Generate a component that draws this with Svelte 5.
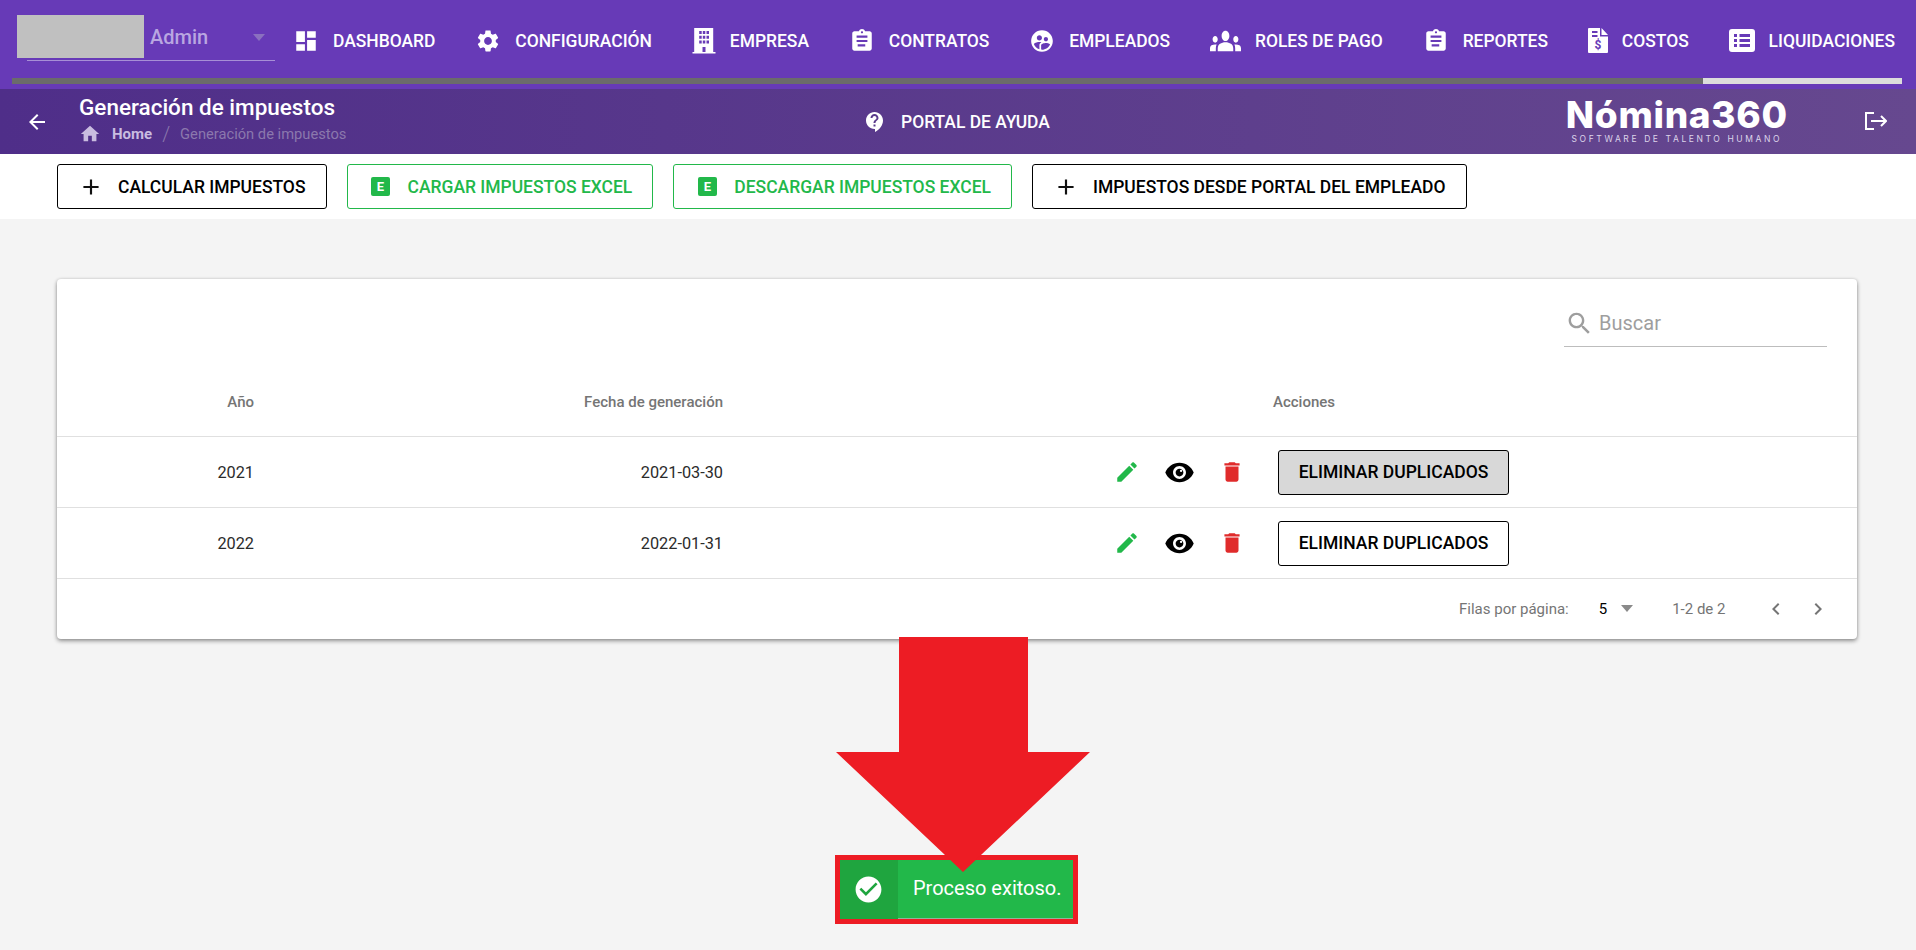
<script>
  const clipboard = 'M19 3h-4.18C14.4 1.84 13.3 1 12 1c-1.3 0-2.4.84-2.82 2H5c-1.1 0-2 .9-2 2v14c0 1.1.9 2 2 2h14c1.1 0 2-.9 2-2V5c0-1.1-.9-2-2-2zm-7 0c.55 0 1 .45 1 1s-.45 1-1 1-1-.45-1-1 .45-1 1-1zm3 14H8v-2h7v2zm2-4H7v-2h10v2zm0-4H7V7h10v2z';

  const menu = [
    { label: 'DASHBOARD', w: 26, h: 26, box: '0 0 24 24', d: 'M3 13h8V3H3v10zm0 8h8v-6H3v6zm10 0h8V11h-8v10zm0-18v6h8V3h-8z' },
    { label: 'CONFIGURACIÓN', w: 26, h: 26, box: '0 0 24 24', d: 'M19.14 12.94c.04-.3.06-.61.06-.94 0-.32-.02-.64-.07-.94l2.03-1.58c.18-.14.23-.41.12-.61l-1.92-3.32c-.12-.22-.37-.29-.59-.22l-2.39.96c-.5-.38-1.03-.7-1.62-.94L14.4 2.81c-.04-.24-.24-.41-.48-.41h-3.84c-.24 0-.43.17-.47.41L9.25 5.35c-.59.24-1.13.57-1.62.94l-2.39-.96c-.22-.08-.47 0-.59.22L2.74 8.87c-.12.21-.08.47.12.61l2.03 1.58c-.05.3-.09.63-.09.94s.02.64.07.94l-2.03 1.58c-.18.14-.23.41-.12.61l1.92 3.32c.12.22.37.29.59.22l2.39-.96c.5.38 1.03.7 1.62.94l.36 2.54c.05.24.24.41.48.41h3.84c.24 0 .44-.17.47-.41l.36-2.54c.59-.24 1.13-.56 1.62-.94l2.39.96c.22.08.47 0 .59-.22l1.92-3.32c.12-.22.07-.47-.12-.61l-2.01-1.58zM12 15.6c-1.98 0-3.6-1.62-3.6-3.6s1.62-3.6 3.6-3.6 3.6 1.62 3.6 3.6-1.62 3.6-3.6 3.6z' },
    { label: 'EMPRESA', w: 24, h: 27, box: '0.5 0 24 27', d: 'M2.7 1h19v24H24v1.4H1V25h1.7zM7.7 4v3h2.5V4zm3.6 0v3h2.5V4zm3.7 0v3h2.5V4zM7.7 8.7v3h2.5v-3zm3.6 0v3h2.5v-3zm3.7 0v3h2.5v-3zM7.7 13.4v3h2.5v-3zm3.6 0v3h2.5v-3zm3.7 0v3h2.5v-3zM11 20v5h3v-5z' },
    { label: 'CONTRATOS', w: 26, h: 26, box: '0 0 24 24', d: clipboard },
    { label: 'EMPLEADOS', w: 26, h: 26, box: '0 0 24 24', d: 'M11.99 2c-5.52 0-10 4.48-10 10s4.48 10 10 10 10-4.48 10-10-4.48-10-10-10zm3.61 6.34c1.07 0 1.93.86 1.93 1.93 0 1.07-.86 1.93-1.93 1.93-1.07 0-1.93-.86-1.93-1.93-.01-1.07.86-1.93 1.93-1.93zm-6-1.58c1.3 0 2.36 1.06 2.36 2.36 0 1.3-1.06 2.36-2.36 2.36s-2.36-1.06-2.36-2.36c0-1.31 1.05-2.36 2.36-2.36zm0 9.13v3.75c-2.4-.75-4.3-2.6-5.14-4.96 1.05-1.12 3.67-1.69 5.14-1.69.53 0 1.2.08 1.9.22-1.64.87-1.9 2.02-1.9 2.68zM11.99 20c-.27 0-.53-.01-.79-.04v-4.07c0-1.42 2.94-2.13 4.4-2.13 1.07 0 2.92.39 3.84 1.15-1.17 2.97-4.06 5.09-7.45 5.09z' },
    { label: 'ROLES DE PAGO', w: 31, h: 22, box: '0 5.5 24 13', stretch: true, d: 'M12 12.75c1.63 0 3.07.39 4.24.9 1.08.48 1.76 1.56 1.76 2.73V18H6v-1.61c0-1.18.68-2.26 1.76-2.73 1.17-.52 2.61-.91 4.24-.91zM4 13c1.1 0 2-.9 2-2s-.9-2-2-2-2 .9-2 2 .9 2 2 2zm1.13 1.1c-.37-.06-.74-.1-1.13-.1-.99 0-1.93.21-2.78.58C.48 14.9 0 15.62 0 16.43V18h4.5v-1.61c0-.83.23-1.61.63-2.29zM20 13c1.1 0 2-.9 2-2s-.9-2-2-2-2 .9-2 2 .9 2 2 2zm4 3.43c0-.81-.48-1.53-1.22-1.85-.85-.37-1.79-.58-2.78-.58-.39 0-.76.04-1.13.1.4.68.63 1.46.63 2.29V18H24v-1.57zM12 6c1.66 0 3 1.34 3 3s-1.34 3-3 3-3-1.34-3-3 1.34-3 3-3z' },
    { label: 'REPORTES', w: 26, h: 26, box: '0 0 24 24', d: clipboard },
    { label: 'COSTOS', w: 20, h: 25, box: '0 0 20 25', dollar: true, d: 'M1 0h11v8.5h8V24a1 1 0 0 1-1 1H1a1 1 0 0 1-1-1V1a1 1 0 0 1 1-1zM4 3v2h5.500V3zm0 4v2h5.500V7zM13.500 0 20 7h-6.500z' },
    { label: 'LIQUIDACIONES', w: 26, h: 23, box: '0 0 26 23', d: 'M3 0h20a3 3 0 0 1 3 3v17a3 3 0 0 1-3 3H3a3 3 0 0 1-3-3V3a3 3 0 0 1 3-3zM5 5v3h3V5zm5.500 0v3H21V5zM5 10v3h3v-3zm5.500 0v3H21v-3zM5 15v3h3v-3zm5.500 0v3H21v-3z' }
  ];

  const actions = [
    { label: 'CALCULAR IMPUESTOS', excel: false },
    { label: 'CARGAR IMPUESTOS EXCEL', excel: true },
    { label: 'DESCARGAR IMPUESTOS EXCEL', excel: true },
    { label: 'IMPUESTOS DESDE PORTAL DEL EMPLEADO', excel: false }
  ];

  const rows = [
    { year: '2021', date: '2021-03-30', hover: true },
    { year: '2022', date: '2022-01-31', hover: false }
  ];
</script>

<div class="page">
  <header class="nav">
    <div class="nav-row">
      <div class="company">
        <div class="company-logo"></div>
        <span class="company-name">Admin</span>
        <span class="caret-light"></span>
      </div>
      <nav class="menu">
        {#each menu as item}
          <div class="menu-item">
            <svg width={item.w} height={item.h} viewBox={item.box} preserveAspectRatio={item.stretch ? 'none' : 'xMidYMid meet'} fill="#fff" fill-rule="evenodd">
              <path d={item.d} />
              {#if item.dollar}
                <text x="10" y="21" text-anchor="middle" font-size="12" font-weight="700" font-family="Roboto, sans-serif" fill="#673ab7">$</text>
              {/if}
            </svg>
            <span>{item.label}</span>
          </div>
        {/each}
      </nav>
    </div>
    <div class="scroll">
      <div class="scroll-track"></div>
      <div class="scroll-thumb"></div>
    </div>
  </header>

  <section class="sub">
    <svg class="back" width="24" height="24" viewBox="0 0 24 24" fill="#fff"><path d="M20 11H7.830l5.590-5.590L12 4l-8 8 8 8 1.410-1.410L7.830 13H20v-2z" /></svg>
    <div class="heading">
      <div class="title">Generación de impuestos</div>
      <div class="crumbs">
        <svg width="22" height="22" viewBox="0 0 24 24" fill="#c9bce0"><path d="M10 20v-6h4v6h5v-8h3L12 3 2 12h3v8z" /></svg>
        <span class="crumb-home">Home</span>
        <span class="crumb-sep">/</span>
        <span class="crumb-current">Generación de impuestos</span>
      </div>
    </div>
    <div class="help">
      <svg width="24" height="24" viewBox="0 0 24 24" fill="#fff"><path d="M11.500 2C6.810 2 3 5.810 3 10.500S6.810 19 11.500 19h.5v3c4.860-2.340 8-7 8-11.500C20 5.810 16.190 2 11.500 2zm1 14.500h-2v-2h2v2zm0-3.500h-2c0-3.250 3-3 3-5 0-1.100-.9-2-2-2s-2 .9-2 2h-2c0-2.210 1.790-4 4-4s4 1.790 4 4c0 2.500-3 2.750-3 5z" /></svg>
      <span>PORTAL DE AYUDA</span>
    </div>
    <div class="brand">
      <div class="brand-name">Nómina360</div>
      <div class="brand-tag">SOFTWARE DE TALENTO HUMANO</div>
    </div>
    <svg class="logout" width="22" height="18" viewBox="0 0 22 18" fill="none" stroke="#fff" stroke-width="2"><path d="M9 1H1v16h8" /><path d="M6 9h15M16 4l5 5-5 5" /></svg>
  </section>

  <div class="actions">
    {#each actions as a}
      <button class="btn" class:green={a.excel}>
        <span class="btn-icon">
          {#if a.excel}
            <span class="excel">E</span>
          {:else}
            <svg width="26" height="26" viewBox="0 0 24 24" fill="#111"><path d="M19 13h-6v6h-2v-6H5v-2h6V5h2v6h6v2z" /></svg>
          {/if}
        </span>
        {a.label}
      </button>
    {/each}
  </div>

  <main class="card">
    <div class="toolbar">
      <div class="search">
        <svg width="29" height="29" viewBox="0 0 24 24" fill="#9e9e9e"><path d="M15.500 14h-.79l-.28-.27C15.410 12.590 16 11.110 16 9.500 16 5.910 13.090 3 9.500 3S3 5.910 3 9.500 5.910 16 9.500 16c1.610 0 3.090-.59 4.230-1.570l.27.28v.79l5 4.990L20.490 19l-4.990-5zm-6 0C7.010 14 5 11.990 5 9.500S7.010 5 9.500 5 14 7.010 14 9.500 11.990 14 9.500 14z" /></svg>
        <span>Buscar</span>
      </div>
    </div>

    <div class="grid head">
      <div class="num">Año</div>
      <div class="num">Fecha de generación</div>
      <div class="head-actions">Acciones</div>
    </div>

    {#each rows as row}
      <div class="grid row">
        <div class="num">{row.year}</div>
        <div class="num">{row.date}</div>
        <div class="row-actions">
          <svg width="26" height="26" viewBox="0 0 24 24" fill="#22b84a"><path d="M3 17.250V21h3.750L17.810 9.940l-3.750-3.750L3 17.250zM20.710 7.040c.39-.39.39-1.020 0-1.410l-2.340-2.340c-.39-.39-1.020-.39-1.410 0l-1.830 1.830 3.750 3.750 1.830-1.830z" /></svg>
          <svg class="eye" width="31" height="31" viewBox="0 0 24 24" fill="#000"><path d="M12 4.500C7 4.500 2.730 7.610 1 12c1.730 4.390 6 7.500 11 7.500s9.270-3.110 11-7.500c-1.730-4.390-6-7.500-11-7.500zM12 17c-2.760 0-5-2.240-5-5s2.240-5 5-5 5 2.240 5 5-2.240 5-5 5zm0-8c-1.660 0-3 1.340-3 3s1.340 3 3 3 3-1.340 3-3-1.340-3-3-3z" /><circle cx="13.200" cy="10.800" r=".9" fill="#fff" /></svg>
          <svg class="trash" width="26" height="26" viewBox="0 0 24 24" fill="#e02b2b"><path d="M6 19c0 1.100.9 2 2 2h8c1.100 0 2-.9 2-2V7H6v12zM19 4h-3.500l-1-1h-5l-1 1H5v2h14V4z" /></svg>
          <button class="dup" class:hover={row.hover}>ELIMINAR DUPLICADOS</button>
        </div>
      </div>
    {/each}

    <div class="pager">
      <span class="pager-label">Filas por página:</span>
      <span class="pager-size">5</span>
      <span class="caret-gray"></span>
      <span class="pager-range">1-2 de 2</span>
      <svg class="chev" width="24" height="24" viewBox="0 0 24 24" fill="#757575"><path d="M15.410 7.410 14 6l-6 6 6 6 1.410-1.410L10.830 12z" /></svg>
      <svg class="chev next" width="24" height="24" viewBox="0 0 24 24" fill="#757575"><path d="M10 6 8.590 7.410 13.170 12l-4.580 4.590L10 18l6-6z" /></svg>
    </div>
  </main>

  <div class="toast">
    <div class="toast-icon">
      <svg width="31" height="31" viewBox="0 0 24 24" fill="#fff"><path d="M12 2C6.480 2 2 6.480 2 12s4.480 10 10 10 10-4.480 10-10S17.520 2 12 2zm-2 15l-5-5 1.410-1.410L10 14.170l7.590-7.590L19 8l-9 9z" /></svg>
    </div>
    <div class="toast-text">Proceso exitoso.</div>
  </div>

  <svg class="arrow" width="254" height="236" viewBox="0 0 254 236" fill="#ed1c24"><path d="M63 0h129v115h62L127 235 0 115h63z" /></svg>
</div>

<style>
  :global(body) {
    margin: 0;
    background: #f4f4f4;
    font-family: Roboto, "Liberation Sans", sans-serif;
  }

  .page {
    position: relative;
    height: 950px;
    overflow: hidden;
  }

  .nav {
    height: 89px;
    background: #673ab7;
    color: #fff;
  }

  .nav-row {
    display: flex;
    height: 78px;
    padding-top: 3px;
    box-sizing: border-box;
    align-items: center;
  }

  .company {
    position: relative;
    display: flex;
    width: 258px;
    height: 45px;
    margin: -3px 0 0 17px;
    padding-top: 15px;
    align-items: flex-start;
    align-self: flex-start;
  }

  .company::after {
    content: "";
    position: absolute;
    left: 10px;
    right: 0;
    bottom: -1px;
    height: 1px;
    background: #a78fd6;
  }

  .company-logo {
    width: 127px;
    height: 43px;
    background: #c0c0c0;
  }

  .company-name {
    margin: 10px 0 0 6px;
    font-size: 20px;
    font-weight: 500;
    color: #b9a6e1;
  }

  .caret-light {
    width: 0;
    height: 0;
    margin: 19px 0 0 45px;
    border-left: 6.500px solid transparent;
    border-right: 6.500px solid transparent;
    border-top: 7px solid #8a70bf;
  }

  .menu {
    display: flex;
    gap: 39.800px;
    margin-left: 18px;
  }

  .menu-item {
    display: flex;
    align-items: center;
    gap: 14px;
    font-size: 17.450px;
    font-weight: 500;
    white-space: nowrap;
  }

  .scroll {
    display: flex;
    height: 6px;
    margin-left: 12px;
    width: 1890px;
  }

  .scroll-track {
    flex: 1;
    background: #6b6b6b;
  }

  .scroll-thumb {
    width: 199px;
    background: #dcdcdc;
  }

  .sub {
    display: flex;
    height: 65px;
    align-items: center;
    color: #fff;
    background: linear-gradient(90deg, #4f2e89, #66488f);
  }

  .back {
    margin-left: 25px;
  }

  .heading {
    width: 474px;
    margin-left: 30px;
  }

  .title {
    font-size: 22.500px;
    font-weight: 500;
    line-height: 24px;
    margin-top: -3px;
  }

  .crumbs {
    display: flex;
    align-items: center;
    height: 22px;
    margin-top: 4px;
    font-size: 15px;
  }

  .crumb-home {
    margin-left: 11px;
    font-weight: 700;
    color: #c9bce0;
  }

  .crumb-sep {
    margin: 0 10px;
    font-size: 20px;
    font-weight: 300;
    color: #8b78ad;
  }

  .crumb-current {
    font-size: 14.700px;
    color: #8b78ad;
  }

  .help {
    display: flex;
    align-items: center;
    gap: 14.500px;
    margin-left: 309.500px;
    font-size: 17.450px;
    font-weight: 500;
  }

  .brand {
    width: 224px;
    margin-left: 515px;
    margin-top: -4px;
    text-align: center;
  }

  .brand-name {
    font-family: Inter, sans-serif;
    font-size: 37px;
    font-weight: 800;
    letter-spacing: 0.700px;
    line-height: 38px;
    white-space: nowrap;
  }

  .brand-tag {
    font-family: Inter, sans-serif;
    font-size: 8.500px;
    letter-spacing: 2.600px;
    line-height: 10px;
    color: #dcd4ea;
    white-space: nowrap;
  }

  .logout {
    margin-left: 76px;
    margin-top: -2px;
  }

  .actions {
    display: flex;
    gap: 20px;
    height: 65px;
    padding: 10px 57px;
    box-sizing: border-box;
    background: #fff;
  }

  .btn {
    display: flex;
    align-items: center;
    gap: 14px;
    height: 45px;
    padding: 0 20px;
    background: #fff;
    border: 1px solid #000;
    border-radius: 3px;
    color: #000;
    font: 500 17.480px Roboto, sans-serif;
    white-space: nowrap;
  }

  .btn.green {
    color: #22b84a;
    border-color: #22b84a;
  }

  .btn-icon {
    display: flex;
    width: 26px;
    justify-content: center;
  }

  .excel {
    width: 19px;
    height: 19px;
    background: #22b84a;
    border-radius: 2px;
    color: #fff;
    font-size: 13px;
    font-weight: 700;
    line-height: 19px;
    text-align: center;
  }

  .card {
    width: 1800px;
    height: 360px;
    margin: 60px 0 0 57px;
    background: #fff;
    border-radius: 4px;
    box-shadow: 0 2px 4px rgba(0, 0, 0, 0.4), 0 0 3px rgba(0, 0, 0, 0.12);
  }

  .toolbar {
    display: flex;
    height: 87px;
    justify-content: flex-end;
    padding-right: 30px;
  }

  .search {
    display: flex;
    align-items: flex-end;
    gap: 5px;
    width: 263px;
    height: 68px;
    padding: 0 0 8px 1px;
    box-sizing: border-box;
    border-bottom: 1px solid #bdbdbd;
    color: #9e9e9e;
    font-size: 20px;
    line-height: 29px;
  }

  .grid {
    display: grid;
    grid-template-columns: 197px 469px 1fr;
    align-items: center;
    border-bottom: 1px solid #e0e0e0;
    box-sizing: border-box;
  }

  .num {
    text-align: right;
  }

  .head {
    height: 71px;
    padding-top: 1px;
    font-size: 15px;
    font-weight: 500;
    color: #757575;
  }

  .head-actions {
    padding-left: 550px;
  }

  .row {
    height: 71px;
    font-size: 16.300px;
    color: #2b2b2b;
  }

  .row:last-of-type {
    border-bottom-width: 2px;
    height: 72px;
  }

  .row-actions {
    display: flex;
    align-items: center;
    padding-left: 391px;
  }

  .eye {
    margin-left: 24px;
  }

  .trash {
    margin-left: 24px;
  }

  .dup {
    width: 231px;
    height: 45px;
    margin-left: 33px;
    background: #fff;
    border: 1px solid #000;
    border-radius: 3px;
    color: #000;
    font: 500 17.500px Roboto, sans-serif;
    white-space: nowrap;
    padding: 0;
  }

  .dup.hover {
    background: #d8d8d8;
  }

  .pager {
    display: flex;
    align-items: center;
    height: 58px;
    padding: 1px 0 0 1402px;
    box-sizing: border-box;
    font-size: 15px;
    color: #757575;
  }

  .pager-size {
    margin-left: 30px;
    color: #000;
  }

  .caret-gray {
    width: 0;
    height: 0;
    margin-left: 14px;
    border-left: 6.500px solid transparent;
    border-right: 6.500px solid transparent;
    border-top: 7px solid #8a8a8a;
  }

  .pager-range {
    margin-left: 39px;
  }

  .chev {
    margin-left: 39px;
  }

  .chev.next {
    margin-left: 18px;
  }

  .toast {
    position: absolute;
    left: 840px;
    top: 860px;
    display: flex;
    width: 233px;
    height: 59px;
    background: #22b84a;
    color: #fff;
    outline: 5px solid #ed1c24;
    box-shadow: inset 0 -1px 0 #8fb59a;
  }

  .toast-icon {
    display: flex;
    width: 58px;
    padding-right: 2px;
    box-sizing: border-box;
    align-items: center;
    justify-content: center;
    background: #1fa53f;
  }

  .toast-text {
    margin-left: 15px;
    font-size: 20px;
    line-height: 56px;
    white-space: nowrap;
  }

  .arrow {
    position: absolute;
    left: 836px;
    top: 637px;
  }
</style>
